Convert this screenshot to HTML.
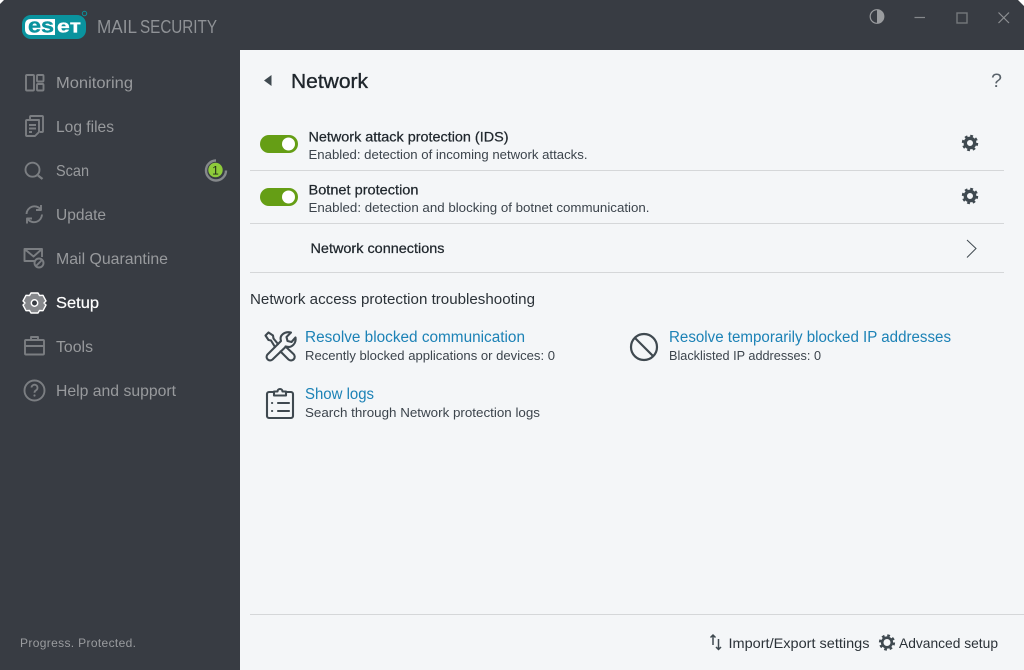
<!DOCTYPE html>
<html><head><meta charset="utf-8"><title>ESET Mail Security</title>
<style>
html,body{margin:0;padding:0;background:#fff;width:1024px;height:670px;overflow:hidden}
svg{display:block}
text{font-family:"Liberation Sans",sans-serif;white-space:pre}
.n{font-size:16px;fill:#989a9d}
.b{font-size:14px;fill:#1f262c;stroke:#1f262c;stroke-width:.25}
.s{font-size:13px;fill:#3c444c}
.l{font-size:15.5px;fill:#1c82b6}
.f{font-size:14px;fill:#2b3238}
.i{fill:none;stroke:#7b7e82;stroke-width:1.9;stroke-linejoin:round}
.d{fill:none;stroke:#3f4950;stroke-width:2.1;stroke-linecap:round;stroke-linejoin:round}
</style></head><body>
<svg width="1024" height="670" viewBox="0 0 1024 670" xmlns="http://www.w3.org/2000/svg">
<rect width="1024" height="670" fill="#383c43"/>
<path d="M0 0h4L0 4zM1024 0h-6l6 6z" fill="#fff"/>
<rect x="240" y="50" width="784" height="620" fill="#f4f6f8"/>

<!-- logo -->
<rect x="22" y="15" width="64" height="24" rx="9" fill="#0a939e"/>
<path d="M31 19H55V35H31Q25 35 25 29V25Q25 19 31 19Z" fill="#fff"/>
<text x="28" y="32.500" font-size="20" font-weight="bold" fill="#0a939e" stroke="#0a939e" stroke-width=".4" textLength="26" lengthAdjust="spacingAndGlyphs">es</text>
<text x="57" y="32.500" font-size="18" font-weight="bold" fill="#fff" stroke="#fff" stroke-width=".3" textLength="24" lengthAdjust="spacingAndGlyphs">eт</text>
<circle cx="84.500" cy="13.500" r="2.200" fill="none" stroke="#0a939e"/>
<text x="97" y="33" font-size="18" fill="#8f9296" textLength="40" lengthAdjust="spacingAndGlyphs">MAIL</text>
<text x="140" y="33" font-size="18" fill="#8f9296" textLength="77" lengthAdjust="spacingAndGlyphs">SECURITY</text>

<!-- window controls -->
<circle cx="877" cy="16.500" r="6.800" fill="none" stroke="#9a9c9f" stroke-width="1.200"/>
<path d="M877 9.700a6.800 6.800 0 0 1 0 13.600z" fill="#9a9c9f"/>
<path d="M914.500 17.500h10.500" stroke="#85888c" stroke-width="1.200"/>
<rect x="957" y="13" width="10" height="10" fill="none" stroke="#75787c" stroke-width="1.400"/>
<path d="M998.500 12.500l10.500 10.500M1009 12.500L998.500 23" stroke="#8d9093" stroke-width="1.200"/>

<!-- sidebar icons -->
<g class="i">
<rect x="26" y="75" width="8" height="15.500" rx="1"/><rect x="37" y="75" width="6.500" height="6.500" rx="1"/><rect x="37" y="84" width="6.500" height="6.500" rx="1"/>
<path d="M30 120v-3a1 1 0 0 1 1-1h11a1 1 0 0 1 1 1v14a1 1 0 0 1-1 1h-2"/>
<path d="M26 121a1 1 0 0 1 1-1h12v12l-4 4h-8a1 1 0 0 1-1-1z"/><path d="M29 125h7M29 128.500h7M29 132h3"/>
<circle cx="32.500" cy="169.700" r="7"/><path d="M38 175.500l4.500 3.500" stroke-width="2.300"/>
<path d="M26.500 214a8 8 0 0 1 14-5M42 214.500a8 8 0 0 1-14 5"/>
<path d="M41 205v5h-5M27 223.500v-5h5"/>
<path d="M35 261h-10.500v-12h17.500v8M24.500 249l9 7.500 8.500-7.500"/>
<circle cx="39" cy="263" r="4.500"/><path d="M36 266l6-6"/>
<rect x="25" y="340" width="19" height="14.500" rx="1"/><path d="M31 340v-3h7v3M25 346h19"/>
<circle cx="34.500" cy="390.500" r="10"/>
</g>
<path d="M31.500 387.500a3 3 0 1 1 4.500 2.800c-1 .6-1.500 1-1.500 2.400" fill="none" stroke="#7b7e82" stroke-width="1.800"/>
<circle cx="34.500" cy="395.500" r="1.100" fill="#7b7e82"/>

<!-- setup gear -->
<path d="M31 293h7l1.500 2.500 3.500-.2 3 5.700-2 2 2 2-3 5.700-3.500-.2-1.500 2.500h-7l-1.500-2.500-3.500.2-3-5.700 2-2-2-2 3-5.700 3.500.2z" fill="#85878b" stroke="#fff" stroke-width="1.400" stroke-linejoin="round"/>
<circle cx="34.500" cy="303" r="3.200" fill="#383c43" stroke="#fff" stroke-width="1.500"/>

<!-- sidebar text -->
<text class="n" x="56" y="88" textLength="77" lengthAdjust="spacingAndGlyphs">Monitoring</text>
<text class="n" x="56" y="132" textLength="58" lengthAdjust="spacingAndGlyphs">Log files</text>
<text class="n" x="56" y="176" textLength="33" lengthAdjust="spacingAndGlyphs">Scan</text>
<text class="n" x="56" y="220" textLength="50" lengthAdjust="spacingAndGlyphs">Update</text>
<text class="n" x="56" y="264" textLength="112" lengthAdjust="spacingAndGlyphs">Mail Quarantine</text>
<text class="n" x="56" y="308" textLength="43" lengthAdjust="spacingAndGlyphs" style="fill:#fff;stroke:#fff;stroke-width:.2">Setup</text>
<text class="n" x="56" y="352" textLength="37" lengthAdjust="spacingAndGlyphs">Tools</text>
<text class="n" x="56" y="396" textLength="120" lengthAdjust="spacingAndGlyphs">Help and support</text>
<text x="20" y="647" font-size="12" fill="#9a9c9f" textLength="116" lengthAdjust="spacing">Progress. Protected.</text>

<!-- scan badge -->
<path d="M216 160.500A10 10 0 1 0 226 170.500" fill="none" stroke="#85888b" stroke-width="2.400"/>
<circle cx="215.500" cy="170" r="7.200" fill="#8ecb3a"/>
<text x="215.500" y="174.500" font-size="12" fill="#1e2618" text-anchor="middle">1</text>

<!-- header -->
<path d="M264 80.500l7.500-5.500v11z" fill="#3f4950"/>
<text x="291" y="88" font-size="20" fill="#1f262c" stroke="#1f262c" stroke-width=".35" textLength="77" lengthAdjust="spacingAndGlyphs">Network</text>
<text x="991" y="87" font-size="19" fill="#59626a" textLength="11" lengthAdjust="spacingAndGlyphs">?</text>

<!-- rows -->
<rect x="260" y="135" width="38" height="18" rx="9" fill="#659e15"/><circle cx="288.500" cy="144" r="6.500" fill="#fff"/>
<text class="b" x="308.500" y="141.500" textLength="200" lengthAdjust="spacingAndGlyphs">Network attack protection (IDS)</text>
<text class="s" x="308.500" y="159" textLength="279" lengthAdjust="spacingAndGlyphs">Enabled: detection of incoming network attacks.</text>
<rect x="260" y="188" width="38" height="18" rx="9" fill="#659e15"/><circle cx="288.500" cy="197" r="6.500" fill="#fff"/>
<text class="b" x="308.500" y="194.500" textLength="110" lengthAdjust="spacingAndGlyphs">Botnet protection</text>
<text class="s" x="308.500" y="212" textLength="341" lengthAdjust="spacingAndGlyphs">Enabled: detection and blocking of botnet communication.</text>
<rect x="250" y="170" width="754" height="1" fill="#d5d7d9"/>
<rect x="250" y="223" width="754" height="1" fill="#d5d7d9"/>
<rect x="250" y="272" width="754" height="1" fill="#d5d7d9"/>
<rect x="250" y="614" width="774" height="1" fill="#d5d7d9"/>
<text class="b" x="310.500" y="253" textLength="134" lengthAdjust="spacingAndGlyphs">Network connections</text>
<path d="M967 240l9 8.500-9 9" fill="none" stroke="#3f4950" stroke-width="1"/>

<!-- gears -->
<g fill="none" stroke="#3f4950">
<circle cx="970" cy="143" r="4.700" stroke-width="3.400"/>
<circle cx="970" cy="143" r="7" stroke-width="2.400" stroke-dasharray="2.750 2.750"/>
<circle cx="970" cy="196" r="4.700" stroke-width="3.400"/>
<circle cx="970" cy="196" r="7" stroke-width="2.400" stroke-dasharray="2.750 2.750"/>
<circle cx="887" cy="642.500" r="4.800" stroke-width="2.600"/>
<circle cx="887" cy="642.500" r="7" stroke-width="2.200" stroke-dasharray="2.750 2.750"/>
</g>

<text x="250" y="304" font-size="15" fill="#2b3238" textLength="285" lengthAdjust="spacingAndGlyphs">Network access protection troubleshooting</text>

<!-- tools icon -->
<path class="d" d="M267.500 354.500L281 341C279 335 285 331 291 332.500L286.500 337L287.500 341L291.500 342L295.500 337.500C296.500 343 292 348.500 286 346.500L272.500 359.500A3.540 3.540 0 0 1 267.500 354.500Z"/>
<path class="d" d="M278 344L273.500 338.500L273 335.500L268.500 332.500L265.500 335.500L268.500 340L271 340.500L275 347M285.500 346.500L293.500 354A3.500 3.500 0 0 1 288.500 359.500L280.500 351.500"/>
<!-- clipboard icon -->
<path class="d" d="M274 392h-5a2 2 0 0 0-2 2v22a2 2 0 0 0 2 2h22a2 2 0 0 0 2-2v-22a2 2 0 0 0-2-2h-5"/>
<path class="d" d="M274 395.500v-4h3.500a2.500 2.500 0 0 1 5 0h3.500v4zM278 403h11M278 411h11M272 403h.2M272 411h.2"/>
<!-- blocked icon -->
<circle cx="644" cy="347" r="13" fill="none" stroke="#3f4950" stroke-width="2.200"/>
<path d="M635 338l18 18" stroke="#3f4950" stroke-width="2.200"/>

<text class="l" x="305" y="342" textLength="220" lengthAdjust="spacingAndGlyphs">Resolve blocked communication</text>
<text class="s" x="305" y="360" textLength="250" lengthAdjust="spacingAndGlyphs">Recently blocked applications or devices: 0</text>
<text class="l" x="305" y="399" textLength="69" lengthAdjust="spacingAndGlyphs">Show logs</text>
<text class="s" x="305" y="417" textLength="235" lengthAdjust="spacingAndGlyphs">Search through Network protection logs</text>
<text class="l" x="669" y="342" textLength="282" lengthAdjust="spacingAndGlyphs">Resolve temporarily blocked IP addresses</text>
<text class="s" x="669" y="360" textLength="152" lengthAdjust="spacingAndGlyphs">Blacklisted IP addresses: 0</text>

<!-- footer -->
<path d="M713 645v-10M710.500 637.500l2.500-2.500 2.500 2.500M718.500 639v10.500M716 647l2.500 2.500 2.500-2.500" fill="none" stroke="#3f4950" stroke-width="1.500"/>
<text class="f" x="728.500" y="648" textLength="141" lengthAdjust="spacingAndGlyphs">Import/Export settings</text>
<text class="f" x="899" y="648" textLength="99" lengthAdjust="spacingAndGlyphs">Advanced setup</text>
</svg>
</body></html>
